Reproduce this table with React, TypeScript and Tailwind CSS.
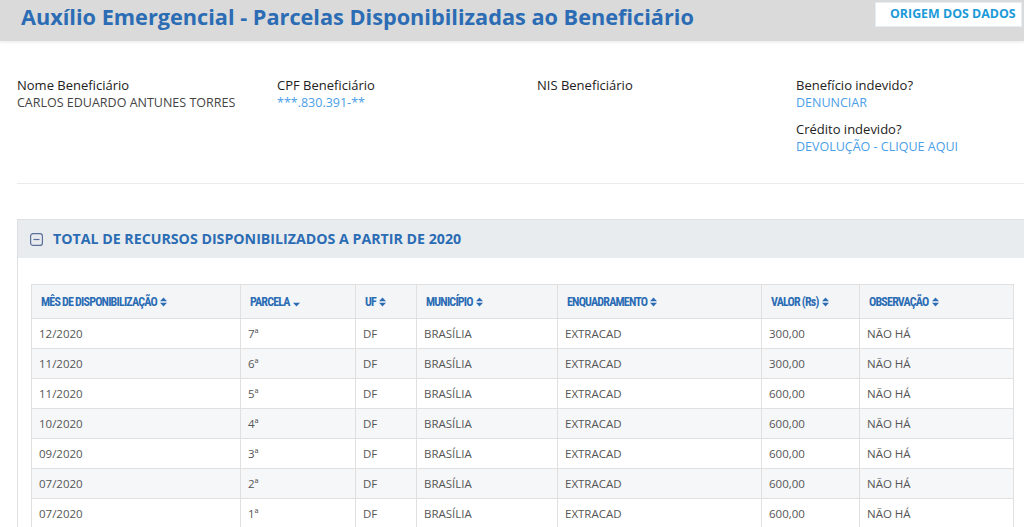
import React from "react";

const rows = [
  ["12/2020", "7ª", "DF", "BRASÍLIA", "EXTRACAD", "300,00", "NÃO HÁ"],
  ["11/2020", "6ª", "DF", "BRASÍLIA", "EXTRACAD", "300,00", "NÃO HÁ"],
  ["11/2020", "5ª", "DF", "BRASÍLIA", "EXTRACAD", "600,00", "NÃO HÁ"],
  ["10/2020", "4ª", "DF", "BRASÍLIA", "EXTRACAD", "600,00", "NÃO HÁ"],
  ["09/2020", "3ª", "DF", "BRASÍLIA", "EXTRACAD", "600,00", "NÃO HÁ"],
  ["07/2020", "2ª", "DF", "BRASÍLIA", "EXTRACAD", "600,00", "NÃO HÁ"],
  ["07/2020", "1ª", "DF", "BRASÍLIA", "EXTRACAD", "600,00", "NÃO HÁ"],
];

const columns = [
  { label: "MÊS DE DISPONIBILIZAÇÃO", w: "w-[209px]", sort: "both" },
  { label: "PARCELA", w: "w-[115px]", sort: "down" },
  { label: "UF", w: "w-[61px]", sort: "both" },
  { label: "MUNICÍPIO", w: "w-[141px]", sort: "both" },
  { label: "ENQUADRAMENTO", w: "w-[204px]", sort: "both" },
  { label: "VALOR (Rs)", w: "w-[98px]", sort: "both" },
  { label: "OBSERVAÇÃO", w: "w-[154px]", sort: "both" },
];

function SortIcon({ type }: { type: string }) {
  return (
    <svg width="7" height="10" viewBox="0 0 7 10" className="ml-[3px] inline-block">
      {type === "both" && <path d="M0 4.2 L3.5 0.5 L7 4.2 Z" fill="#2b6cb4" />}
      <path d="M0 5.8 L7 5.8 L3.5 9.5 Z" fill="#2b6cb4" />
    </svg>
  );
}

function InfoItem({ label, value, blue }: { label: string; value?: string; blue?: boolean }) {
  return (
    <div className="leading-[18px]">
      <div className="text-[13px] text-[#222]">{label}</div>
      {value && (
        <div className={`text-[12.5px] ${blue ? "text-[#4aa0e6]" : "text-[#444]"}`}>{value}</div>
      )}
    </div>
  );
}

export default function App() {
  return (
    <div className="w-[1024px] h-[527px] overflow-hidden bg-white font-['Open_Sans',sans-serif]">
      {/* Header */}
      <header className="h-[41px] bg-[#dadada] flex items-start justify-between pl-[21px] shadow-[0_2px_2px_rgba(0,0,0,0.06)]">
        <h1 className="text-[21.7px] font-bold text-[#2b6cb4] leading-[34px]">
          Auxílio Emergencial - Parcelas Disponibilizadas ao Beneficiário
        </h1>
        <div className="mt-[2px] mr-[2px] h-[25px] w-[147px] bg-white border border-[#e3eef7] flex items-center pl-[14px] text-[12.4px] font-bold text-[#1c9ad8]">
          ORIGEM DOS DADOS
        </div>
      </header>

      {/* Dados do beneficiário */}
      <section className="pl-[17px] pt-[35px]">
        <div className="flex">
          <div className="w-[260px]">
            <InfoItem label="Nome Beneficiário" value="CARLOS EDUARDO ANTUNES TORRES" />
          </div>
          <div className="w-[260px]">
            <InfoItem label="CPF Beneficiário" value="***.830.391-**" blue />
          </div>
          <div className="w-[259px]">
            <InfoItem label="NIS Beneficiário" />
          </div>
          <div className="flex flex-col gap-[8px]">
            <InfoItem label="Benefício indevido?" value="DENUNCIAR" blue />
            <InfoItem label="Crédito indevido?" value="DEVOLUÇÃO - CLIQUE AQUI" blue />
          </div>
        </div>
        <div className="mt-[27px] border-t border-[#ebebeb]" />
      </section>

      {/* Painel */}
      <div className="ml-[17px] mt-[35px] w-[1030px] border border-[#dde0e3]">
        <div className="h-[38px] bg-[#e9ecef] flex items-center pl-[12px]">
          <svg width="13" height="13" viewBox="0 0 13 13">
            <rect x="0.6" y="0.6" width="11.8" height="11.8" rx="2.5" fill="none" stroke="#5a6f9a" strokeWidth="1.2" />
            <path d="M3.5 6.5 H9.5" stroke="#5a6f9a" strokeWidth="1.2" />
          </svg>
          <span className="ml-[10px] text-[14.2px] font-bold text-[#2b6cb4]">
            TOTAL DE RECURSOS DISPONIBILIZADOS A PARTIR DE 2020
          </span>
        </div>
        <div className="pl-[13px] pt-[26px]">
          <table className="border-collapse border border-[#e0e0e0] text-[11.5px] text-[#555]">
            <thead>
              <tr className="h-[34px] bg-[#f4f5f7]">
                {columns.map((c) => (
                  <th
                    key={c.label}
                    className={`${c.w} border border-[#e0e0e0] text-left font-bold pl-[9px] text-[12px] text-[#2b6cb4] font-['Liberation_Sans_Narrow','Roboto_Condensed',sans-serif] tracking-[-0.8px]`}
                  >
                    {c.label}
                    <SortIcon type={c.sort} />
                  </th>
                ))}
              </tr>
            </thead>
            <tbody>
              {rows.map((r, i) => (
                <tr key={i} className={`h-[30px] ${i % 2 === 1 ? "bg-[#f5f7f9]" : "bg-white"}`}>
                  {r.map((cell, j) => (
                    <td key={j} className="border border-[#e0e0e0] pl-[7px]">
                      {cell}
                    </td>
                  ))}
                </tr>
              ))}
            </tbody>
          </table>
        </div>
      </div>
    </div>
  );
}
